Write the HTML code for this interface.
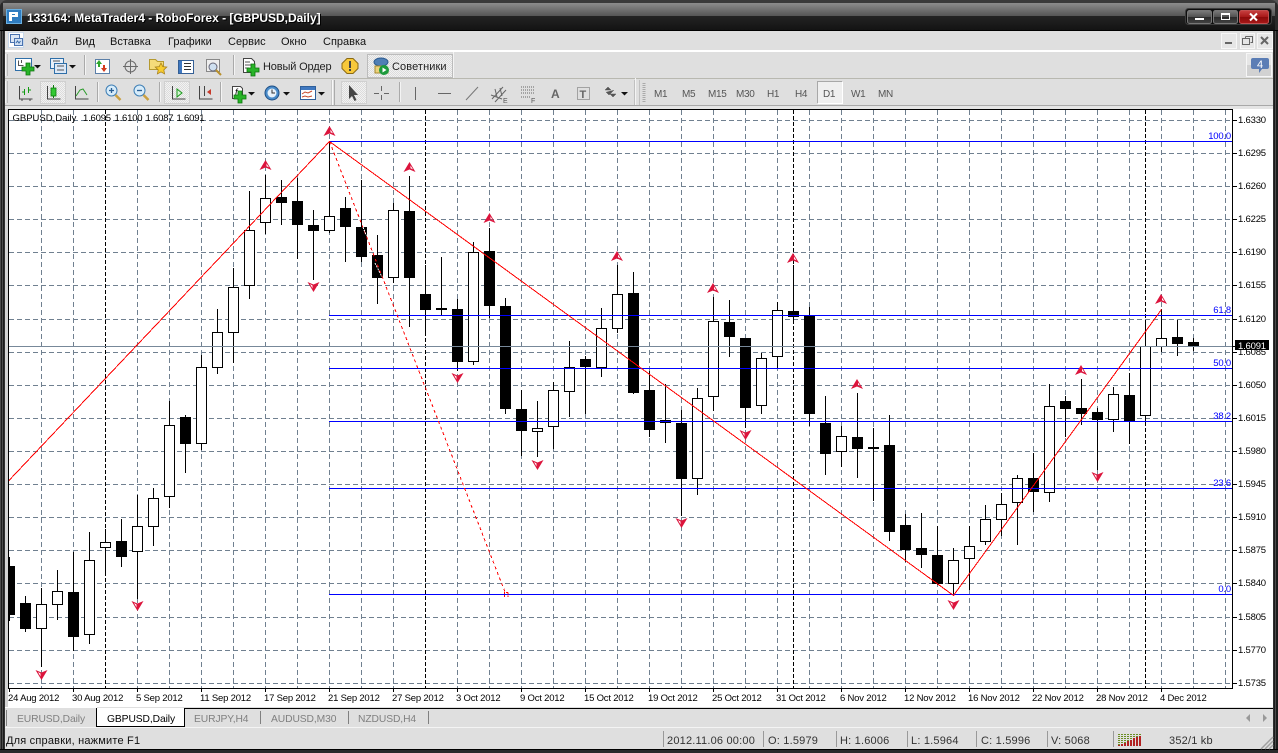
<!DOCTYPE html>
<html><head><meta charset="utf-8"><title>MetaTrader4</title>
<style>
html,body{margin:0;padding:0;background:#1b1b1b;width:1278px;height:753px;overflow:hidden}
svg{display:block;position:absolute;left:0;top:0}
text{font-family:"Liberation Sans","Noto Sans CJK SC",sans-serif;font-size:9.5px;letter-spacing:-.2px;fill:#000;white-space:pre}
.m{font-size:11px;letter-spacing:0;fill:#111}
.tb{font-size:11px;letter-spacing:0;fill:#222}
.tf{font-size:10px;letter-spacing:-.3px;fill:#555}
.st{font-size:11px;letter-spacing:.2px;fill:#333}
.tab{font-size:10.3px;letter-spacing:-.1px;fill:#808080}
.fib{fill:#0000ff;text-anchor:end}
</style></head><body>
<svg width="1278" height="753" viewBox="0 0 1278 753" xmlns="http://www.w3.org/2000/svg">
<defs>
<linearGradient id="tg" x1="0" y1="0" x2="0" y2="1"><stop offset="0" stop-color="#8c8c8c"/><stop offset="1" stop-color="#565656"/></linearGradient>
<linearGradient id="td" x1="0" y1="0" x2="0" y2="1"><stop offset="0" stop-color="#242424"/><stop offset="1" stop-color="#131313"/></linearGradient>
<linearGradient id="bg" x1="0" y1="0" x2="0" y2="1"><stop offset="0" stop-color="#7c7c7c"/><stop offset=".5" stop-color="#505050"/><stop offset=".51" stop-color="#2a2a2a"/><stop offset="1" stop-color="#444"/></linearGradient>
<linearGradient id="br" x1="0" y1="0" x2="0" y2="1"><stop offset="0" stop-color="#c84040"/><stop offset=".5" stop-color="#a81818"/><stop offset=".51" stop-color="#8c0a0a"/><stop offset="1" stop-color="#a81818"/></linearGradient>
<clipPath id="cc"><rect x="9" y="110" width="1223" height="578"/></clipPath>
<pattern id="hat" width="2" height="2" patternUnits="userSpaceOnUse"><rect width="2" height="2" fill="#f2f2f2"/><rect width="1" height="1" fill="#dcdcdc"/><rect x="1" y="1" width="1" height="1" fill="#dcdcdc"/></pattern>
<g id="up"><path d="M0 -5L6 5L0 2.500L-6 5Z M1 -1.500L1 1.200L3.500 2.400Z" fill="#dc143c" fill-rule="evenodd"/></g>
<g id="dn"><path d="M-6 -5L0 -2.500L6 -5L0 5Z M-3.500 -3L-1 -1.500L-1 1.500Z" fill="#dc143c" fill-rule="evenodd"/></g>
<path id="ar" d="M0 0h7l-3.500 3.500z" fill="#111"/>
</defs>

<!-- window chrome -->
<rect width="1278" height="753" fill="#1c1c1c"/>
<rect width="1278" height="3" fill="#3a3a3a"/>
<rect x="3" y="3" width="1272" height="13" fill="url(#tg)"/>
<rect x="3" y="16" width="1272" height="14" fill="url(#td)"/>
<rect y="30" width="1278" height="1" fill="#000"/>
<path d="M0 3h3v27h-3zM1275 3h3v27h-3z" fill="#2a2a2a"/>
<path d="M0 0h7a7 7 0 0 0-7 7zM1278 0h-7a7 7 0 0 1 7 7z" fill="#555"/>
<path d="M0.500 31V753M2.500 31V753M1275.500 31V753" stroke="#4c4c4c"/>
<path d="M4.500 31V753M1273.500 31V753" stroke="#303030"/>
<!-- app icon -->
<rect x="6.500" y="9.500" width="15" height="14" fill="#2f7cc0" stroke="#6bb0e0"/>
<path d="M9 12h9v5h-6v4h-3zM12 14v1h3v-1z" fill="#fff" fill-rule="evenodd"/>
<text x="27" y="22" style="font-size:12px;font-weight:bold;letter-spacing:-.01px;fill:#000" dx="1" dy="1">133164: MetaTrader4 - RoboForex - [GBPUSD,Daily]</text>
<text x="27" y="22" style="font-size:12px;font-weight:bold;letter-spacing:-.01px;fill:#fff">133164: MetaTrader4 - RoboForex - [GBPUSD,Daily]</text>
<!-- window buttons -->
<rect x="1185.500" y="8.500" width="86" height="16" rx="3" fill="#0e0e0e" stroke="#3d3d3d"/>
<rect x="1187.500" y="10.500" width="24" height="13" rx="2" fill="url(#bg)" stroke="#777"/>
<rect x="1213.500" y="10.500" width="24" height="13" rx="2" fill="url(#bg)" stroke="#777"/>
<rect x="1239.500" y="10.500" width="29" height="13" rx="2" fill="url(#br)" stroke="#c25050"/>
<rect x="1195" y="18" width="9" height="2" fill="#fff"/>
<rect x="1221.500" y="13.500" width="8" height="6" fill="none" stroke="#fff"/><rect x="1221" y="13" width="9" height="2" fill="#fff"/>
<path d="M1250 13.500l7 7M1257 13.500l-7 7" stroke="#fff" stroke-width="2"/>

<!-- client bars -->
<rect x="5" y="31" width="1268" height="19" fill="#dfdfdf"/>
<rect x="5" y="50" width="1268" height="2" fill="#fff"/>
<rect x="5" y="52" width="1268" height="26" fill="#dfdfdf"/>
<rect x="5" y="78" width="1268" height="1" fill="#b8b8b0"/>
<rect x="5" y="79" width="1268" height="26" fill="#dfdfdf"/>
<rect x="5" y="105" width="1268" height="1" fill="#a8a8a8"/>
<rect x="5" y="106" width="1268" height="3" fill="#e4e4e4"/>

<!-- menu icon -->
<rect x="8.500" y="32.500" width="15" height="15" fill="#fff" stroke="#c8d8ea"/>
<rect x="10.500" y="34.500" width="9" height="8" fill="#dbe6f4" stroke="#4a73b0"/>
<rect x="14.500" y="38.500" width="8" height="7" fill="#cfdff2" stroke="#4a73b0"/>
<path d="M16 43l1.500-2 1.500 2 1.500-2" stroke="#3a6aa8" fill="none"/>
<text class="m" x="31" y="45">Файл</text>
<text class="m" x="75" y="45">Вид</text>
<text class="m" x="110" y="45">Вставка</text>
<text class="m" x="168" y="45">Графики</text>
<text class="m" x="228" y="45">Сервис</text>
<text class="m" x="281" y="45">Окно</text>
<text class="m" x="323" y="45">Справка</text>
<!-- MDI buttons -->
<rect x="1221.500" y="33.500" width="15" height="15" fill="#e6e6e6" stroke="#f6f6f6"/>
<rect x="1225" y="42" width="7" height="2" fill="#666"/>
<rect x="1240.500" y="33.500" width="14" height="15" fill="#e6e6e6" stroke="#f6f6f6"/>
<path d="M1245.500 36.500h7v6h-2M1245.500 36.500v2" fill="none" stroke="#666"/><rect x="1242.500" y="38.500" width="7" height="6" fill="none" stroke="#666"/>
<rect x="1257.500" y="33.500" width="15" height="15" fill="#e6e6e6" stroke="#f6f6f6"/>
<path d="M1261 37l7 7M1268 37l-7 7" stroke="#666" stroke-width="2"/>

<!-- toolbar row 1 -->
<rect x="7" y="54" width="1" height="22" fill="#bbb"/><rect x="5" y="54" width="1" height="22" fill="#f4f4f4"/>
<rect x="15.500" y="58.500" width="16" height="12" fill="#fff" stroke="#2f6fa8"/>
<path d="M18.500 60.500v5h5M21.500 60v3" stroke="#555" fill="none"/>
<path d="M26 63h4v4h4v4h-4v4h-4v-4h-4v-4h4z" fill="#28b428" stroke="#0c760c" stroke-width=".8"/>
<use href="#ar" x="34" y="65"/>
<rect x="50.500" y="58.500" width="13" height="10" fill="#e8f0fa" stroke="#2f6fa8"/>
<rect x="54.500" y="63.500" width="12" height="10" fill="#dce8f6" stroke="#2f6fa8"/>
<path d="M53 61h7M57 66h7M57 70h7" stroke="#555"/>
<use href="#ar" x="69" y="65"/>
<rect x="84" y="55" width="1" height="20" fill="#aaa"/><rect x="85" y="55" width="1" height="20" fill="#f4f4f4"/>
<rect x="95.500" y="59.500" width="14" height="14" fill="#fff" stroke="#5b7fa8"/>
<path d="M99 60l3 4h-2v3h-2v-3h-2z" fill="#2da82d"/><path d="M104 72l3-4h-2v-3h-2v3h-2z" fill="#d33a1a"/>
<circle cx="130.500" cy="66.500" r="5.500" fill="none" stroke="#6a6a6a"/><path d="M130.500 59v15M123 66.500h15" stroke="#6a6a6a"/>
<path d="M149.500 59.500h6l2 2h6v8h-14z" fill="#f5dc7a" stroke="#b59a30"/>
<path d="M161 63l1.800 3.600 4 .5-3 2.800.8 4-3.600-2-3.600 2 .8-4-3-2.800 4-.5z" fill="#f7cc2e" stroke="#a9821a" stroke-width=".8"/>
<rect x="178.500" y="60.500" width="15" height="13" fill="#fff" stroke="#345f95"/><rect x="179" y="61" width="3" height="12" fill="#3f78c0"/>
<path d="M184 63.500h7M184 66.500h7M184 69.500h7" stroke="#333"/>
<rect x="206.500" y="59.500" width="13" height="12" fill="#eee" stroke="#888"/>
<circle cx="213" cy="67" r="4" fill="#cfe0f0" stroke="#667"/><path d="M216 70l5 5" stroke="#b8902c" stroke-width="2"/>
<rect x="233" y="55" width="1" height="20" fill="#aaa"/><rect x="234" y="55" width="1" height="20" fill="#f4f4f4"/>
<path d="M243.500 58.500h8l3 3v11h-11z" fill="#fff" stroke="#444"/><path d="M245 62h5M245 65h7M245 68h4" stroke="#555"/>
<path d="M251 64h4v4h4v4h-4v4h-4v-4h-4v-4h4z" fill="#28b428" stroke="#0c760c" stroke-width=".8"/>
<text class="tb" x="263" y="70" style="letter-spacing:-.15px">Новый Ордер</text>
<path d="M347 58.500h6l5 5v5l-5 5h-6l-5-5v-5z" fill="#f7c83a" stroke="#8a6a14"/><rect x="349" y="61" width="2" height="7" fill="#444"/><rect x="349" y="69" width="2" height="2" fill="#444"/>
<rect x="367.500" y="54.500" width="85" height="23" fill="url(#hat)" stroke="#bcbcbc"/>
<path d="M453.500 52V78" stroke="#f4f4f4"/>
<ellipse cx="381" cy="62" rx="7" ry="4" fill="#4f7fb5" stroke="#2c5a8f"/>
<path d="M375 66h11l2 7h-13z" fill="#ecd27a" stroke="#a78a30"/>
<circle cx="384" cy="70" r="5" fill="#1d9a3c"/><path d="M382.500 67.500l4 2.500-4 2.500z" fill="#fff"/>
<text class="tb" x="392" y="70" style="letter-spacing:.1px">Советники</text>
<!-- notification -->
<rect x="1246.500" y="53.500" width="25" height="23" fill="#e6e6e6" stroke="#f6f6f6"/><rect x="1247" y="65" width="24" height="11" fill="#d2d2d2"/>
<path d="M1253 58h14a2 2 0 0 1 2 2v7a2 2 0 0 1-2 2h-5l-3 4v-4h-6a2 2 0 0 1-2-2v-7a2 2 0 0 1 2-2z" fill="#5b7db5"/>
<text x="1257" y="68" style="font-size:11px;fill:#fff;letter-spacing:0">4</text>

<!-- toolbar row 2 -->
<rect x="7" y="81" width="1" height="22" fill="#bbb"/><rect x="5" y="81" width="1" height="22" fill="#f4f4f4"/>
<path d="M19.500 86v13h13M22 99v2M30 99v2" fill="none" stroke="#444"/>
<path d="M24.500 89v6M28.500 87v6" stroke="#129a12"/><path d="M24 92h-2M29 90h2" stroke="#129a12"/>
<rect x="40.500" y="81.500" width="25" height="22" fill="url(#hat)" stroke="#d0d0d0"/>
<path d="M47.500 86v13h13" fill="none" stroke="#444"/>
<path d="M53.500 85v13" stroke="#0b7a0b"/><rect x="51" y="88" width="5" height="8" fill="#32c832" stroke="#0b7a0b" stroke-width=".8"/>
<path d="M75.500 86v13h13" fill="none" stroke="#444"/><path d="M76 96l4-6 3-1 4 6" fill="none" stroke="#2a9a2a"/>
<rect x="97" y="82" width="1" height="20" fill="#aaa"/><rect x="98" y="82" width="1" height="20" fill="#f4f4f4"/>
<circle cx="111.500" cy="90.500" r="5.500" fill="#d7ecfa" stroke="#3f7fb5"/><path d="M109 90.500h5M111.500 88v5" stroke="#2a5f95" stroke-width="1.300"/><path d="M115.500 95l5 5" stroke="#caa040" stroke-width="2.500"/>
<circle cx="139.500" cy="90.500" r="5.500" fill="#d7ecfa" stroke="#3f7fb5"/><path d="M137 90.500h5" stroke="#2a5f95" stroke-width="1.300"/><path d="M143.500 95l5 5" stroke="#caa040" stroke-width="2.500"/>
<rect x="159" y="82" width="1" height="20" fill="#aaa"/><rect x="160" y="82" width="1" height="20" fill="#f4f4f4"/>
<rect x="164.500" y="81.500" width="25" height="22" fill="url(#hat)" stroke="#d0d0d0"/>
<path d="M172.500 86v13h13" fill="none" stroke="#444"/><path d="M177 89l5 4-5 4z" fill="#d4f4d4" stroke="#1a9a1a"/>
<path d="M199.500 86v13h13" fill="none" stroke="#444"/><path d="M204.500 86v10" stroke="#444"/><path d="M211 89l-4 3 4 3z" fill="#c83a2a"/>
<rect x="220" y="82" width="1" height="20" fill="#aaa"/><rect x="221" y="82" width="1" height="20" fill="#f4f4f4"/>
<path d="M232.500 86.500h8l2 2v10h-10z" fill="#fff" stroke="#444"/><text x="235" y="95" style="font-size:9px;font-style:italic;letter-spacing:0">f</text>
<path d="M238 91h4v4h4v4h-4v4h-4v-4h-4v-4h4z" fill="#28b428" stroke="#0c760c" stroke-width=".8"/>
<use href="#ar" x="248" y="92"/>
<circle cx="272" cy="93" r="7" fill="#4a8cca" stroke="#1f4f85"/><circle cx="272" cy="93" r="4.500" fill="#e8f2fa"/><path d="M272 89.500v3.500h3" fill="none" stroke="#333"/>
<use href="#ar" x="283" y="92"/>
<rect x="300.500" y="86.500" width="15" height="13" fill="#fff" stroke="#2f5f9a"/><rect x="301" y="87" width="14" height="3" fill="#3f78c0"/>
<path d="M302 94l3-2 3 1 4-2M302 97l3-1 3 1 4-1" fill="none" stroke="#c84a2a"/>
<use href="#ar" x="318" y="92"/>
<rect x="331" y="80" width="1" height="25" fill="#c8c8c8"/><rect x="332" y="80" width="1" height="25" fill="#f8f8f8"/><rect x="334" y="80" width="1" height="25" fill="#aaa"/>
<rect x="341.500" y="81.500" width="25" height="22" fill="url(#hat)" stroke="#d0d0d0"/>
<path d="M349 85l0 14 3-3 2.500 5 2-1-2.500-5 4 0z" fill="#444"/>
<path d="M381.500 86v5M381.500 95v5M374 93.500h5M384 93.500h5" stroke="#666"/>
<rect x="399" y="82" width="1" height="20" fill="#aaa"/><rect x="400" y="82" width="1" height="20" fill="#f4f4f4"/>
<path d="M415.500 87v13" stroke="#666"/>
<path d="M438 93.500h13" stroke="#666"/>
<path d="M466 100l12-13" stroke="#777"/>
<path d="M492 99l11-12M495 102l11-12M491 95l11 4M495 89l2 8M500 88l2 8" stroke="#666" fill="none"/><text x="503" y="103" style="font-size:7px;letter-spacing:0;fill:#555">E</text>
<path d="M521 87h14M521 90h14M521 93h14M521 97h10" stroke="#666" stroke-dasharray="1 1"/><text x="531" y="103" style="font-size:7px;letter-spacing:0;fill:#555">F</text>
<text x="551" y="98" style="font-size:12px;font-weight:bold;letter-spacing:0;fill:#666">A</text>
<rect x="577.500" y="87.500" width="12" height="12" fill="none" stroke="#666" stroke-dasharray="1 1"/><text x="579.500" y="98" style="font-size:11px;font-weight:bold;letter-spacing:0;fill:#666">T</text>
<path d="M608 87l3 3h-6zM613 97l3-3h-6zM606 92l3 3 5-5" fill="#555" stroke="#555" stroke-width=".5"/>
<use href="#ar" x="621" y="92"/>
<rect x="634" y="80" width="1" height="25" fill="#c0c0c0"/><rect x="635" y="78" width="1" height="27" fill="#f4f4f4"/><rect x="639" y="80" width="1" height="25" fill="#c0c0c0"/>
<path d="M644 83V102" stroke="#aaa" stroke-width="3" stroke-dasharray="1 1"/>
<text class="tf" x="654" y="97">M1</text>
<text class="tf" x="682" y="97">M5</text>
<text class="tf" x="708" y="97">M15</text>
<text class="tf" x="736" y="97">M30</text>
<text class="tf" x="767" y="97">H1</text>
<text class="tf" x="795" y="97">H4</text>
<rect x="817.500" y="81.500" width="25" height="22" fill="#efefef"/><path d="M817.500 103.500v-22h25" fill="none" stroke="#a8a8a8"/><path d="M842.500 81.500v22h-25" fill="none" stroke="#fff"/>
<text class="tf" x="823" y="97">D1</text>
<text class="tf" x="851" y="97">W1</text>
<text class="tf" x="878" y="97">MN</text>

<!-- chart area -->
<rect x="5" y="109" width="1268" height="598" fill="#fff"/>
<rect x="5" y="109" width="3" height="598" fill="#d4d4d4"/>
<rect x="8" y="109" width="1225" height="1" fill="#000"/>
<rect x="8" y="109" width="1" height="580" fill="#000"/>
<rect x="1232" y="109" width="1" height="580" fill="#000"/>
<rect x="8" y="688" width="1225" height="1" fill="#000"/>

<g clip-path="url(#cc)" shape-rendering="crispEdges">
<!-- grid -->
<path stroke="#708090" stroke-dasharray="5 3" fill="none" d="M9 120.500H1232M9 153.500H1232M9 186.500H1232M9 219.500H1232M9 252.500H1232M9 285.500H1232M9 319.500H1232M9 352.500H1232M9 385.500H1232M9 418.500H1232M9 451.500H1232M9 484.500H1232M9 517.500H1232M9 550.500H1232M9 583.500H1232M9 617.500H1232M9 650.500H1232M9 683.500H1232
M41.500 110V688M73.500 110V688M137.500 110V688M169.500 110V688M201.500 110V688M233.500 110V688M265.500 110V688M297.500 110V688M329.500 110V688M361.500 110V688M393.500 110V688M457.500 110V688M489.500 110V688M521.500 110V688M553.500 110V688M585.500 110V688M617.500 110V688M649.500 110V688M681.500 110V688M713.500 110V688M745.500 110V688M777.500 110V688M809.500 110V688M841.500 110V688M873.500 110V688M905.500 110V688M937.500 110V688M969.500 110V688M1001.500 110V688M1033.500 110V688M1065.500 110V688M1097.500 110V688M1129.500 110V688M1161.500 110V688M1193.500 110V688M1225.500 110V688"/>
<path stroke="#000" stroke-dasharray="4 2" fill="none" d="M105.500 110V688M425.500 110V688M793.500 110V688M1145.500 110V688"/>
<!-- wicks -->
<path stroke="#000" fill="none" d="M9.500 557V621M25.500 596V632M41.500 588V667M57.500 570V620M73.500 552V651M89.500 532V644M105.500 529V576M121.500 519V567M137.500 495V599M153.500 488V546M169.500 401V508M185.500 415V473M201.500 355V450M217.500 309V374M233.500 268V363M249.500 191V299M265.500 175V234M281.500 180V225M297.500 178V259M313.500 210V280M329.500 141V233M345.500 197V262M361.500 180V262M377.500 235V304M393.500 203V283M409.500 176V327M425.500 265V334M441.500 257V315M457.500 299V371M473.500 242V365M489.500 228V318M505.500 298V414M521.500 390V456M537.500 401V457M553.500 382V449M569.500 341V417M585.500 356V414M601.500 308V377M617.500 265V333M633.500 272V394M649.500 371V437M665.500 384V443M681.500 410V516M697.500 388V495M713.500 297V411M729.500 300V357M745.500 338V428M761.500 353V414M777.500 302V369M793.500 265V322M809.500 307V426M825.500 396V475M841.500 426V467M857.500 393V478M873.500 428V501M889.500 415V541M905.500 514V562M921.500 513V568M937.500 526V585M953.500 548V595M969.500 526V590M985.500 505V545M1001.500 493V536M1017.500 475V545M1033.500 453V512M1049.500 384V502M1065.500 396V437M1081.500 379V425M1097.500 408V470M1113.500 387V432M1129.500 373V444M1145.500 323V422M1161.500 309V352M1177.500 320V356M1193.500 338V351"/>
<!-- white bodies -->
<path stroke="#000" fill="#fff" d="M36.500 604.500h10v24h-10zM52.500 591.500h10v13h-10zM84.500 560.500h10v74h-10zM100.500 542.500h10v5h-10zM132.500 526.500h10v25h-10zM148.500 498.500h10v28h-10zM164.500 425.500h10v71h-10zM196.500 367.500h10v76h-10zM212.500 332.500h10v35h-10zM228.500 287.500h10v45h-10zM244.500 230.500h10v55h-10zM260.500 198.500h10v24h-10zM324.500 216.500h10v14h-10zM388.500 210.500h10v67h-10zM436.500 308.500h10v1h-10zM468.500 252.500h10v109h-10zM532.500 428.500h10v3h-10zM548.500 390.500h10v36h-10zM564.500 367.500h10v24h-10zM596.500 328.500h10v39h-10zM612.500 294.500h10v34h-10zM692.500 398.500h10v80h-10zM708.500 321.500h10v75h-10zM756.500 358.500h10v47h-10zM772.500 310.500h10v46h-10zM836.500 436.500h10v15h-10zM948.500 560.500h10v23h-10zM964.500 546.500h10v12h-10zM980.500 519.500h10v22h-10zM996.500 504.500h10v15h-10zM1012.500 478.500h10v24h-10zM1044.500 406.500h10v86h-10zM1108.500 394.500h10v25h-10zM1140.500 346.500h10v69h-10zM1156.500 338.500h10v8h-10z"/>
<!-- black bodies -->
<path fill="#000" d="M4 566h11v49h-11zM20 603h11v26h-11zM68 592h11v45h-11zM116 541h11v16h-11zM180 417h11v27h-11zM276 197h11v6h-11zM292 201h11v24h-11zM308 225h11v6h-11zM340 208h11v19h-11zM356 227h11v30h-11zM372 255h11v23h-11zM404 211h11v67h-11zM420 294h11v16h-11zM452 309h11v53h-11zM484 251h11v55h-11zM500 306h11v103h-11zM516 409h11v22h-11zM580 359h11v8h-11zM628 293h11v100h-11zM644 390h11v40h-11zM660 420h11v3h-11zM676 423h11v56h-11zM724 322h11v15h-11zM740 338h11v70h-11zM788 311h11v6h-11zM804 316h11v98h-11zM820 423h11v31h-11zM852 437h11v12h-11zM868 447h11v2h-11zM884 445h11v87h-11zM900 525h11v25h-11zM916 548h11v7h-11zM932 555h11v29h-11zM1028 478h11v14h-11zM1060 401h11v8h-11zM1076 408h11v6h-11zM1092 412h11v8h-11zM1124 395h11v26h-11zM1172 337h11v7h-11zM1188 342h11v5h-11z"/>
<!-- bid line -->
<rect x="9" y="346" width="1223" height="1" fill="#778899"/>
<!-- fib lines -->
<path stroke="#0000ff" fill="none" d="M329 141.500H1232M329 315.500H1232M329 368.500H1232M329 421.500H1232M329 488.500H1232M329 594.500H1232"/>
</g>
<g clip-path="url(#cc)" shape-rendering="crispEdges">
<path stroke="#ff0000" fill="none" stroke-width="1" d="M8 481.500L329.500 141.500L953.500 595.500L1161.500 309.500"/>
<path stroke="#ff0000" fill="none" stroke-dasharray="3 3" d="M329.500 141.500L505 592"/>
<path stroke="#ff0000" fill="none" d="M504.500 597V592.500H508M508 592.500V597" stroke-dasharray="2 1"/>
<path stroke="#fff" fill="none" stroke-dasharray="2 1" d="M363 227L366.500 236M375 263L382 277"/>
</g>
<!-- arrows -->
<use href="#up" x="329.500" y="131"/><use href="#up" x="409.500" y="167"/><use href="#up" x="489.500" y="218"/><use href="#up" x="617" y="256"/><use href="#up" x="713" y="288"/><use href="#up" x="793" y="258"/><use href="#up" x="857" y="384"/><use href="#up" x="265.500" y="165"/><use href="#up" x="1081" y="370"/><use href="#up" x="1161" y="299"/>
<use href="#dn" x="41.500" y="675"/><use href="#dn" x="137.500" y="606"/><use href="#dn" x="313.500" y="287"/><use href="#dn" x="457.500" y="378"/><use href="#dn" x="537.500" y="465"/><use href="#dn" x="681.500" y="523"/><use href="#dn" x="745.500" y="435"/><use href="#dn" x="953.500" y="605"/><use href="#dn" x="1097.500" y="477"/>

<text x="12.500" y="121" style="letter-spacing:0">GBPUSD,Daily</text>
<text x="83" y="121">1.6095</text><text x="114.500" y="121">1.6100</text><text x="145.500" y="121">1.6087</text><text x="176.500" y="121">1.6091</text>

<text class="fib" x="1231" y="139">100.0</text>
<text class="fib" x="1231" y="313">61.8</text>
<text class="fib" x="1231" y="366">50.0</text>
<text class="fib" x="1231" y="419">38.2</text>
<text class="fib" x="1231" y="486">23.6</text>
<text class="fib" x="1231" y="592">0.0</text>

<!-- price axis -->
<path stroke="#000" d="M1233 120.500h4M1233 153.500h4M1233 186.500h4M1233 219.500h4M1233 252.500h4M1233 285.500h4M1233 319.500h4M1233 352.500h4M1233 385.500h4M1233 418.500h4M1233 451.500h4M1233 484.500h4M1233 517.500h4M1233 550.500h4M1233 583.500h4M1233 617.500h4M1233 650.500h4M1233 683.500h4"/>
<text x="1238" y="123">1.6330</text><text x="1238" y="156">1.6295</text><text x="1238" y="189">1.6260</text><text x="1238" y="222">1.6225</text><text x="1238" y="255">1.6190</text><text x="1238" y="288">1.6155</text><text x="1238" y="322">1.6120</text><text x="1238" y="355">1.6085</text><text x="1238" y="388">1.6050</text><text x="1238" y="421">1.6015</text><text x="1238" y="454">1.5980</text><text x="1238" y="487">1.5945</text><text x="1238" y="520">1.5910</text><text x="1238" y="553">1.5875</text><text x="1238" y="586">1.5840</text><text x="1238" y="620">1.5805</text><text x="1238" y="653">1.5770</text><text x="1238" y="686">1.5735</text>
<rect x="1235" y="340" width="34" height="10" fill="#000"/><rect x="1233" y="346" width="2" height="1" fill="#000"/>
<text x="1238" y="349" style="fill:#fff">1.6091</text>

<!-- date axis -->
<path stroke="#000" d="M9.500 689v3M73.500 689v3M137.500 689v3M201.500 689v3M265.500 689v3M329.500 689v3M393.500 689v3M457.500 689v3M521.500 689v3M585.500 689v3M649.500 689v3M713.500 689v3M777.500 689v3M841.500 689v3M905.500 689v3M969.500 689v3M1033.500 689v3M1097.500 689v3M1161.500 689v3"/>
<text x="8" y="701">24 Aug 2012</text><text x="72" y="701">30 Aug 2012</text><text x="136" y="701">5 Sep 2012</text><text x="200" y="701">11 Sep 2012</text><text x="264" y="701">17 Sep 2012</text><text x="328" y="701">21 Sep 2012</text><text x="392" y="701">27 Sep 2012</text><text x="456" y="701">3 Oct 2012</text><text x="520" y="701">9 Oct 2012</text><text x="584" y="701">15 Oct 2012</text><text x="648" y="701">19 Oct 2012</text><text x="712" y="701">25 Oct 2012</text><text x="776" y="701">31 Oct 2012</text><text x="840" y="701">6 Nov 2012</text><text x="904" y="701">12 Nov 2012</text><text x="968" y="701">16 Nov 2012</text><text x="1032" y="701">22 Nov 2012</text><text x="1096" y="701">28 Nov 2012</text><text x="1160" y="701">4 Dec 2012</text>

<!-- tabs -->
<rect x="5" y="707" width="1268" height="21" fill="#dfdfdf"/>
<rect x="5" y="707" width="92" height="1" fill="#fff"/>
<rect x="184" y="708" width="1089" height="1" fill="#000"/>
<rect x="97" y="708" width="87" height="19" fill="#fff"/>
<path d="M96.500 708V726.500H184.500V708" fill="none" stroke="#000"/>
<path d="M6.500 710V726M260.500 711V724M348.500 711V724M428.500 711V724" stroke="#808080"/>
<text class="tab" x="17" y="722">EURUSD,Daily</text>
<text class="tab" x="107" y="722" style="fill:#000">GBPUSD,Daily</text>
<text class="tab" x="194" y="722">EURJPY,H4</text>
<text class="tab" x="271" y="722">AUDUSD,M30</text>
<text class="tab" x="358" y="722">NZDUSD,H4</text>
<path d="M1250 714v8l-4-4zM1263 714v8l4-4z" fill="#999"/>

<!-- status -->
<rect x="5" y="727" width="1268" height="1" fill="#f4f4f4"/>
<rect x="5" y="728" width="1268" height="21" fill="#dfdfdf"/>
<rect x="0" y="749" width="1278" height="1" fill="#000"/>
<rect x="0" y="750" width="1278" height="3" fill="#2a2a2a"/>
<text class="st" x="6" y="744" style="fill:#111">Для справки, нажмите F1</text>
<path d="M663.500 731V747M763.500 731V747M836.500 731V747M907.500 731V747M976.500 731V747M1047.500 731V747M1113.500 731V747" stroke="#999"/>
<text class="st" x="667" y="744">2012.11.06 00:00</text>
<text class="st" x="768" y="744">O: 1.5979</text>
<text class="st" x="840" y="744">H: 1.6006</text>
<text class="st" x="911" y="744">L: 1.5964</text>
<text class="st" x="981" y="744">C: 1.5996</text>
<text class="st" x="1051" y="744">V: 5068</text>
<text class="st" x="1169" y="744">352/1 kb</text>
<g shape-rendering="crispEdges"><path stroke="#6b8e23" stroke-width="2" stroke-dasharray="1 1" d="M1119 734v12M1122 734v10M1125 734v9M1128 734v7M1131 734v6M1134 734v4M1137 734v3M1140 734v2"/>
<path stroke="#b22222" stroke-width="2" d="M1119 745v1M1122 744v2M1125 743v3M1128 741v5M1131 740v6M1134 738v8M1137 737v9M1140 736v10"/></g>
<path d="M1261 749l12-12M1265 749l8-8M1269 749l4-4" stroke="#a0a0a0" stroke-width="1.500"/>
</svg>
</body></html>
